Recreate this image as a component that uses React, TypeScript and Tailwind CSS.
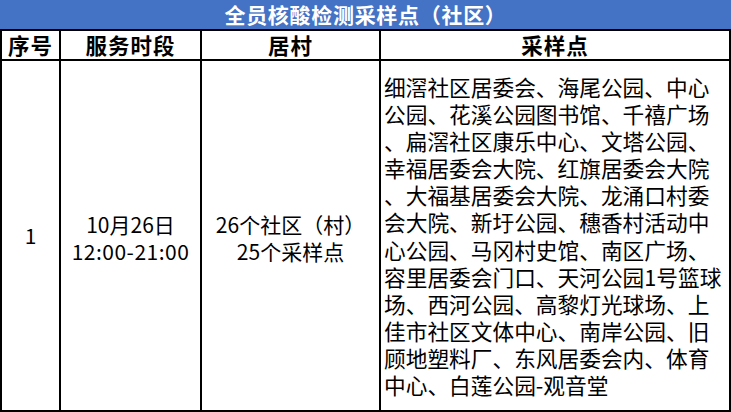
const sites = [
  "细滘社区居委会、海尾公园、中心",
  "公园、花溪公园图书馆、千禧广场",
  "、扁滘社区康乐中心、文塔公园、",
  "幸福居委会大院、红旗居委会大院",
  "、大福基居委会大院、龙涌口村委",
  "会大院、新圩公园、穗香村活动中",
  "心公园、马冈村史馆、南区广场、",
  "容里居委会门口、天河公园1号篮球",
  "场、西河公园、高黎灯光球场、上",
  "佳市社区文体中心、南岸公园、旧",
  "顾地塑料厂、东风居委会内、体育",
  "中心、白莲公园-观音堂",
];

const font = { fontFamily: '"Noto Sans CJK SC", "Liberation Sans", sans-serif' };

export default function App() {
  return (
    <div className="w-[731px] h-[412px] bg-white text-black overflow-hidden" style={font}>
      {/* Title */}
      <div className="h-[29px] bg-[#4472c4] text-white font-bold text-[21px] leading-[29px] tracking-[0.7px] text-center">
        全员核酸检测采样点（社区）
      </div>

      {/* Table */}
      <div className="grid grid-cols-[57px_139px_177px_348px] grid-rows-[28px_349px] gap-[2px] p-[2px] bg-black">
        <div className="bg-white flex items-center justify-center font-bold text-[21.5px] tracking-[1px]">序号</div>
        <div className="bg-white flex items-center justify-center font-bold text-[21.5px] tracking-[1px]">服务时段</div>
        <div className="bg-white flex items-center justify-center font-bold text-[21.5px] tracking-[1px]">居村</div>
        <div className="bg-white flex items-center justify-center font-bold text-[21.5px] tracking-[1px]">采样点</div>

        <div className="bg-white flex items-center justify-center text-[21px]">1</div>
        <div className="bg-white flex flex-col items-center justify-center text-[21px] leading-[27px] pt-[5px]">
          <div>10月26日</div>
          <div className="tracking-[0.5px]">12:00-21:00</div>
        </div>
        <div className="bg-white flex flex-col items-center justify-center text-[21px] leading-[27px] pt-[5px]">
          <div>26个社区（村）</div>
          <div>25个采样点</div>
        </div>
        <div className="bg-white flex flex-col justify-center pl-[3px] text-[21.7px] leading-[27.1px] whitespace-nowrap">
          {sites.map((line, i) => (
            <div key={i}>{line}</div>
          ))}
        </div>
      </div>
    </div>
  );
}
